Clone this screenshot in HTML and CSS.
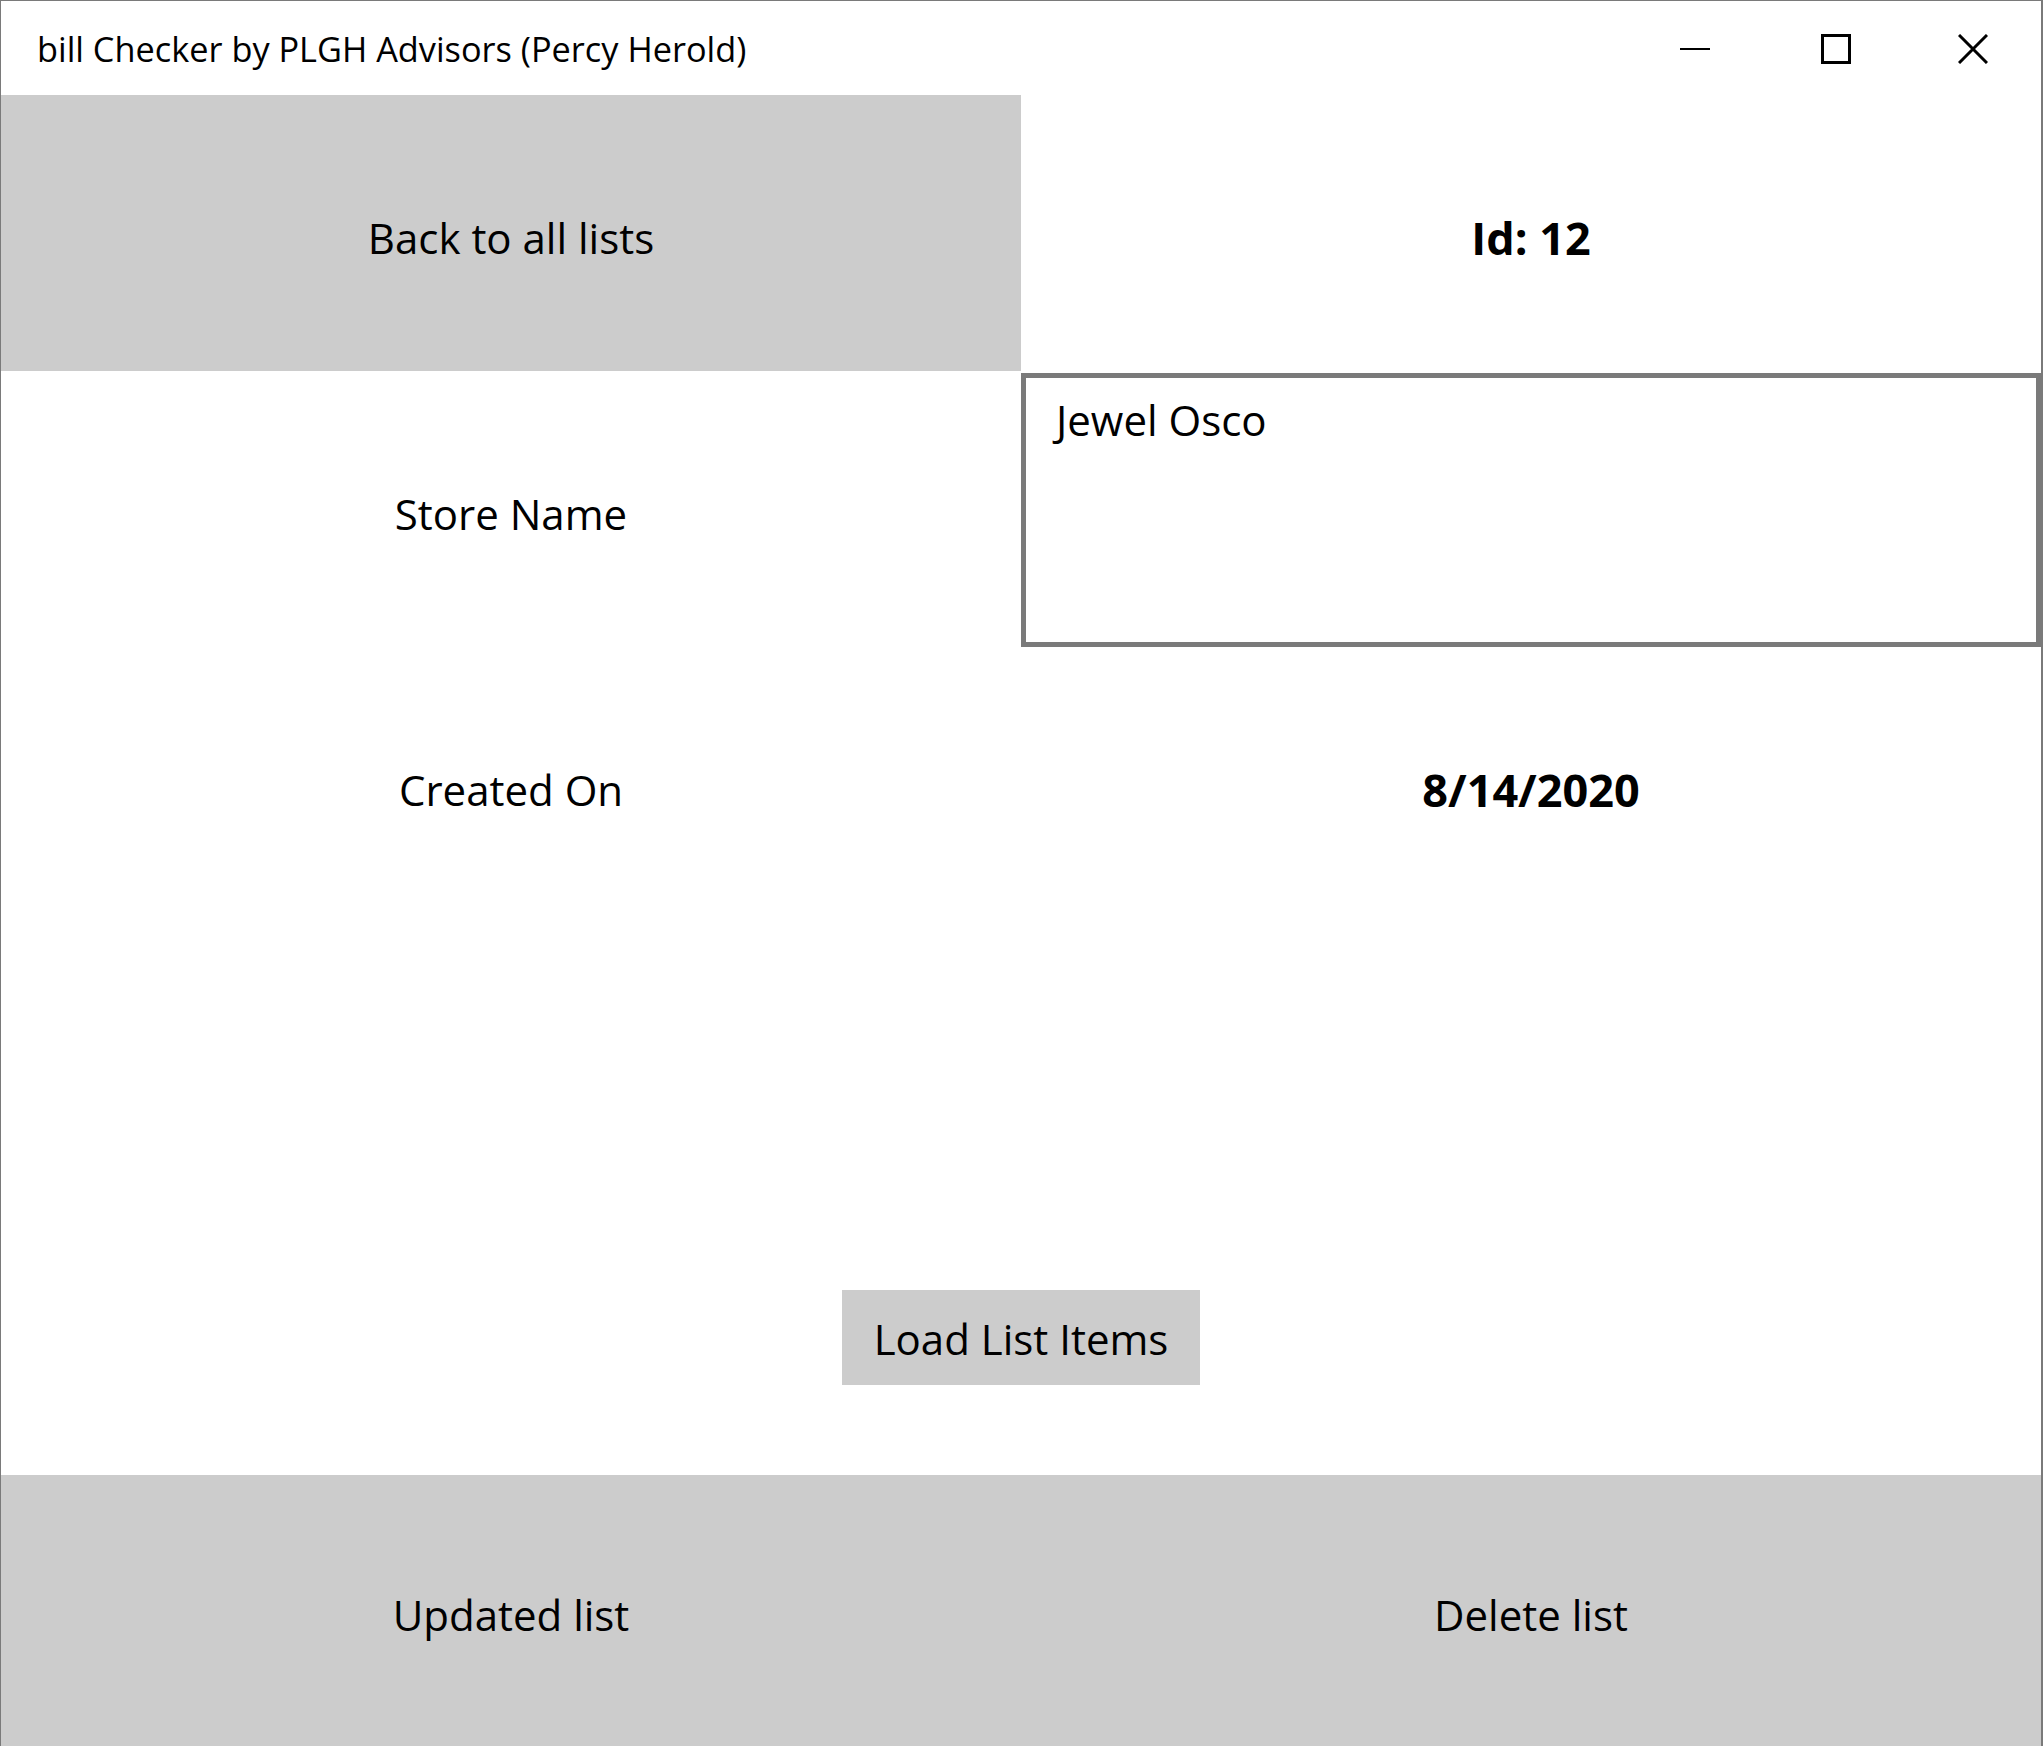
FILE: index.html
```html
<!DOCTYPE html>
<html lang="en">
  <head>
    <meta charset="UTF-8" />
    <meta name="viewport" content="width=device-width, initial-scale=1.0" />
    <title>bill Checker</title>
    <link rel="stylesheet" href="styles.css">
  </head>
  <body>
    <div class="window">
      <div class="titlebar">
        <span class="title">bill Checker by PLGH Advisors (Percy Herold)</span>
        <div class="caption-buttons">
          <div class="caption-btn btn-min" title="Minimize">
            <svg width="30" height="30" viewBox="0 0 30 30">
              <line x1="0" y1="15" x2="30" y2="15" stroke="#000" stroke-width="2" />
            </svg>
          </div>
          <div class="caption-btn" title="Maximize">
            <svg width="30" height="30" viewBox="0 0 30 30">
              <rect x="1.5" y="1.5" width="27" height="27" fill="none" stroke="#000" stroke-width="3" />
            </svg>
          </div>
          <div class="caption-btn" title="Close">
            <svg width="30" height="30" viewBox="0 0 30 30">
              <path d="M1 1 L29 29 M29 1 L1 29" stroke="#000" stroke-width="3" />
            </svg>
          </div>
        </div>
      </div>

      <div class="page">
        <button class="btn">Back to all lists</button>
        <div class="cell bold">Id: 12</div>

        <div class="cell">Store Name</div>
        <div class="textbox">Jewel Osco</div>

        <div class="cell">Created On</div>
        <div class="cell bold">8/14/2020</div>

        <div class="cell wide"></div>

        <div class="cell wide">
          <button class="btn btn-load">Load List Items</button>
        </div>

        <button class="btn">Updated list</button>
        <button class="btn">Delete list</button>
      </div>
    </div>
  </body>
</html>
```

FILE: styles.css
```css
* {
  margin: 0;
  padding: 0;
  box-sizing: border-box;
  font-family: 'Open Sans', 'Noto Sans', sans-serif;
}

body {
  background-color: #ffffff;
  color: #000000;
}

.window {
  height: 100vh;
  display: flex;
  flex-direction: column;
  border-top: 1px solid #7a7a7a;
  border-left: 1px solid #7a7a7a;
  border-right: 2px solid #7a7a7a;
  background-color: white;
}

.titlebar {
  height: 94px;
  display: flex;
  align-items: center;
  justify-content: space-between;
  flex-shrink: 0;
}

.title {
  font-size: 34.3px;
  padding-left: 36px;
}

.caption-buttons {
  display: flex;
  height: 100%;
}

.caption-btn {
  width: 137px;
  height: 100%;
  display: flex;
  align-items: center;
  justify-content: center;
  padding-top: 2px;
}

.btn-min {
  padding-right: 8px;
}

.page {
  flex: 1;
  display: grid;
  grid-template-columns: 1fr 1fr;
  grid-template-rows: repeat(5, 276px) 1fr;
}

.cell {
  display: flex;
  align-items: center;
  justify-content: center;
  font-size: 42px;
  padding-top: 8px;
}

.bold {
  font-weight: 700;
  font-size: 45px;
}

.wide {
  grid-column: span 2;
  padding-top: 0;
}

.btn {
  background-color: #cccccc;
  border: none;
  font-size: 42px;
  color: #000000;
  cursor: pointer;
  padding-top: 8px;
}

.btn-load {
  padding: 20px 32px 18px;
}

.textbox {
  border: 5px solid #7a7a7a;
  margin-top: 2px;
  font-size: 42px;
  padding: 13px 30px;
}
```
